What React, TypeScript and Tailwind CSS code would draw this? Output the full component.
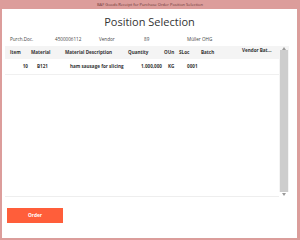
import React from "react";

export default function App() {
  const font = { fontFamily: '"Open Sans", "Noto Sans", sans-serif' };
  return (
    <div className="w-[300px] h-[240px] bg-[#dc9d9b] flex flex-col" style={font}>
      <div className="h-[9px] flex items-center justify-center text-[4px] text-[#6a3636]">
        BAF Goods Receipt for Purchase Order Position Selection
      </div>
      <div className="flex-1 ml-[2px] mr-[3px] mb-[2px] bg-white flex flex-col px-[3px]">
        <div className="h-[25px] flex items-center justify-center text-[11px] text-[#333] pt-[2px]">
          Position Selection
        </div>
        <div className="h-[10px] flex items-center text-[4.6px] text-[#444]">
          <span className="w-[50px] pl-[5px]">Purch.Doc.</span>
          <span className="w-[44px]">4500006112</span>
          <span className="w-[45px]">Vendor</span>
          <span className="w-[43px]">89</span>
          <span>Müller OHG</span>
        </div>
        <div className="flex mt-[2px] h-[151px]">
          <div className="flex-1 flex flex-col border-b border-[#eee]">
            <div className="h-[13px] bg-[#f4f4f4] flex items-center text-[4.6px] font-bold text-[#333] relative">
              <span className="w-[26px] pl-[5px]">Item</span>
              <span className="w-[34px]">Material</span>
              <span className="w-[63px]">Material Description</span>
              <span className="w-[36px]">Quantity</span>
              <span className="w-[15px]">OUn</span>
              <span className="w-[22px]">SLoc</span>
              <span className="w-[40px]">Batch</span>
              <span className="absolute left-[237px] top-[1px]">Vendor Bat...</span>
            </div>
            <div className="h-[16px] flex items-center text-[4.6px] font-bold text-[#333] border-b border-[#f0f0f0]">
              <span className="w-[26px] text-right pr-[3px]">10</span>
              <span className="w-[34px] pl-[6px]">B121</span>
              <span className="w-[65px] pl-[5px]">ham sausage for slicing</span>
              <span className="w-[32px] text-right">1.000,000</span>
              <span className="w-[23px] pl-[6px]">KG</span>
              <span className="w-[22px] pl-[2px]">0001</span>
            </div>
          </div>
          <div className="w-[10px] flex flex-col bg-[#f4f4f4]">
            <div className="h-[4px] flex items-center justify-center">
              <svg width="4" height="3" viewBox="0 0 4 3"><path d="M0 3 L2 0 L4 3 Z" fill="#999" /></svg>
            </div>
            <div className="flex-1 bg-[#cdcdcd] mx-[1px]" />
            <div className="h-[5px] flex items-center justify-center bg-white">
              <svg width="4" height="3" viewBox="0 0 4 3"><path d="M0 0 L4 0 L2 3 Z" fill="#999" /></svg>
            </div>
          </div>
          <div className="w-[5px]" />
        </div>
        <div className="mt-[11px] ml-[2px]">
          <button className="w-[56px] h-[15px] bg-[#ff5e3a] text-white text-[4.8px] font-bold flex items-center justify-center">
            Order
          </button>
        </div>
      </div>
    </div>
  );
}
